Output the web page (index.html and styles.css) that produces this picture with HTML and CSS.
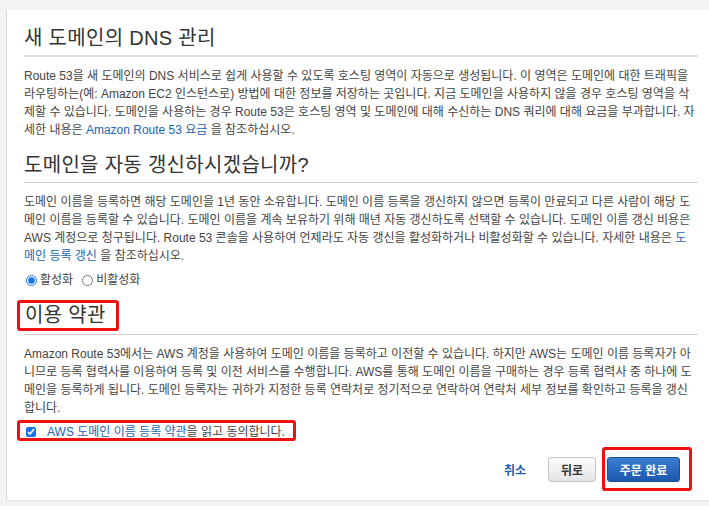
FILE: index.html
```html
<!DOCTYPE html>
<html lang="ko">
<head>
<meta charset="utf-8">
<title>도메인 등록 검토</title>
<link rel="stylesheet" href="styles.css">
</head>
<body>
<main class="panel">
  <section class="sec sec-dns">
    <h2 class="title">새 도메인의 DNS 관리</h2>
    <p class="text">Route 53을 새 도메인의 DNS 서비스로 쉽게 사용할 수 있도록 호스팅 영역이 자동으로 생성됩니다. 이 영역은 도메인에 대한 트래픽을 라우팅하는(예: Amazon EC2 인스턴스로) 방법에 대한 정보를 저장하는 곳입니다. 지금 도메인을 사용하지 않을 경우 호스팅 영역을 삭제할 수 있습니다. 도메인을 사용하는 경우 Route 53은 호스팅 영역 및 도메인에 대해 수신하는 DNS 쿼리에 대해 요금을 부과합니다. 자세한 내용은 <a class="link" href="#">Amazon Route 53 요금</a> 을 참조하십시오.</p>
  </section>

  <section class="sec sec-renew">
    <h2 class="title">도메인을 자동 갱신하시겠습니까?</h2>
    <p class="text">도메인 이름을 등록하면 해당 도메인을 1년 동안 소유합니다. 도메인 이름 등록을 갱신하지 않으면 등록이 만료되고 다른 사람이 해당 도메인 이름을 등록할 수 있습니다. 도메인 이름을 계속 보유하기 위해 매년 자동 갱신하도록 선택할 수 있습니다. 도메인 이름 갱신 비용은 AWS 계정으로 청구됩니다. Route 53 콘솔을 사용하여 언제라도 자동 갱신을 활성화하거나 비활성화할 수 있습니다. 자세한 내용은 <a class="link" href="#">도메인 등록 갱신</a> 을 참조하십시오.</p>
    <div class="radios">
      <label class="radio"><input type="radio" name="renew" checked>활성화</label>
      <label class="radio"><input type="radio" name="renew">비활성화</label>
    </div>
  </section>

  <section class="sec sec-terms">
    <h2 class="title"><span class="mark mark-title">이용 약관</span></h2>
    <p class="text">Amazon Route 53에서는 AWS 계정을 사용하여 도메인 이름을 등록하고 이전할 수 있습니다. 하지만 AWS는 도메인 이름 등록자가 아니므로 등록 협력사를 이용하여 등록 및 이전 서비스를 수행합니다. AWS를 통해 도메인 이름을 구매하는 경우 등록 협력사 중 하나에 도메인을 등록하게 됩니다. 도메인 등록자는 귀하가 지정한 등록 연락처로 정기적으로 연락하여 연락처 세부 정보를 확인하고 등록을 갱신합니다.</p>
    <label class="agree mark"><input type="checkbox" checked><span><a class="link" href="#">AWS 도메인 이름 등록 약관</a>을 읽고 동의합니다.</span></label>
  </section>

  <div class="actions">
    <a class="cancel" href="#">취소</a>
    <button class="btn btn-back" type="button">뒤로</button>
    <span class="mark mark-btn"><button class="btn btn-primary" type="button">주문 완료</button></span>
  </div>
</main>
</body>
</html>
```

FILE: styles.css
```css
html, body {
  margin: 0;
  padding: 0;
}
body {
  background: #f2f3f3;
  font-family: "Liberation Sans", Arial, "Noto Sans CJK KR", sans-serif;
  color: #444;
  width: 709px;
  height: 506px;
  overflow: hidden;
}
.panel {
  margin: 10px 0 0 6px;
  background: #fff;
  border-left: 1px solid #d9d9d9;
  border-bottom: 1px solid #e6e6e6;
  padding: 13px 11px 9px 17px;
}
.sec {
  display: block;
}
.title {
  margin: 0;
  font-size: 20px;
  line-height: 30px;
  font-weight: normal;
  color: #333;
  letter-spacing: 0.3px;
  padding-bottom: 2px;
  border-bottom: 1px solid #cfcfcf;
}
.sec-dns .title {
  border-bottom: 2px solid #dedede;
}
.text {
  margin: 10px 3px 0 0;
  font-size: 12px;
  line-height: 18px;
  letter-spacing: 0;
}
.sec-dns .text {
  margin-top: 10px;
}
.sec-renew {
  margin-top: 11px;
}
.link {
  color: #2066b0;
  text-decoration: none;
}
.radios {
  margin-top: 6px;
  display: flex;
  gap: 7px;
  font-size: 12px;
  line-height: 18px;
}
.radio {
  display: inline-flex;
  align-items: center;
}
.radio input {
  width: 11px;
  height: 11px;
  margin: 0 3px 0 2px;
  accent-color: #1a73e8;
}
.sec-terms {
  margin-top: 11px;
}
.sec-terms .title {
  padding-bottom: 3px;
}
.mark {
  outline: 3px solid #f01010;
  outline-offset: -3px;
  border-radius: 3px;
}
.mark-title {
  display: inline-block;
  margin-left: -7px;
  padding: 0 13px 0 8px;
  height: 31px;
}
.agree {
  margin: 3px 0 0 -7px;
  height: 21px;
  padding: 0 11px 0 9px;
  display: inline-flex;
  align-items: center;
  font-size: 12px;
}
.agree input {
  width: 10px;
  height: 10px;
  margin: 3px 11px 0 0;
  accent-color: #1a73e8;
}
.actions {
  margin-top: 6px;
  display: flex;
  justify-content: flex-end;
  align-items: center;
  padding-right: 6px;
}
.cancel {
  color: #1d5ca8;
  font-weight: bold;
  font-size: 12px;
  text-decoration: none;
  margin-right: 22px;
}
.btn {
  font-family: inherit;
  font-weight: bold;
  font-size: 12px;
  height: 25px;
  border-radius: 3px;
  padding: 0;
  cursor: pointer;
}
.btn-back {
  width: 48px;
  color: #333;
  background: linear-gradient(#fdfdfd, #e4e4e4);
  border: 1px solid #c4c4c4;
  margin-right: 6px;
}
.mark-btn {
  display: inline-block;
  padding: 10px 12px 9px 5px;
}
.btn-primary {
  display: block;
  width: 73px;
  color: #fff;
  background: linear-gradient(#3a7ed2, #1b58ad);
  border: 1px solid #1c4f96;
}
```
